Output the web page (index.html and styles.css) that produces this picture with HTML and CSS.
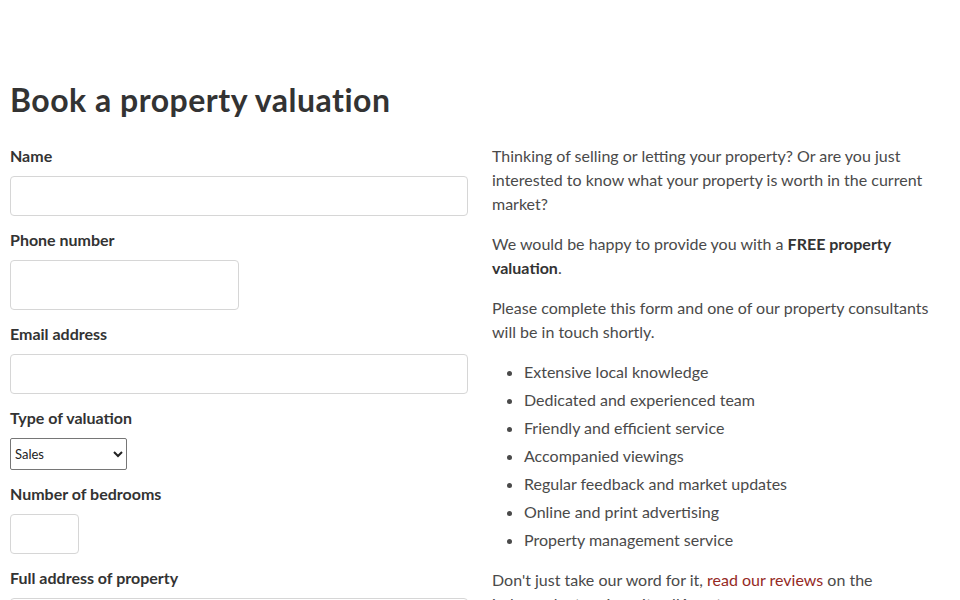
FILE: index.html
```html
<!DOCTYPE html>
<html lang="en">
<head>
<meta charset="utf-8">
<title>Book a property valuation</title>
<link rel="stylesheet" href="styles.css">
</head>
<body>
<main class="page">
  <h1 class="title">Book a property valuation</h1>
  <div class="columns">
    <form class="form">
      <div class="field">
        <label class="label" for="name">Name</label>
        <input class="input input-full" id="name" type="text">
      </div>
      <div class="field">
        <label class="label" for="phone">Phone number</label>
        <input class="input input-half input-tall" id="phone" type="tel">
      </div>
      <div class="field">
        <label class="label" for="email">Email address</label>
        <input class="input input-full" id="email" type="email">
      </div>
      <div class="field">
        <label class="label" for="type">Type of valuation</label>
        <select class="select" id="type">
          <option>Sales</option>
          <option>Lettings</option>
        </select>
      </div>
      <div class="field">
        <label class="label" for="beds">Number of bedrooms</label>
        <input class="input input-small" id="beds" type="text">
      </div>
      <div class="field">
        <label class="label" for="address">Full address of property</label>
        <textarea class="input input-full textarea" id="address"></textarea>
      </div>
    </form>
    <section class="info">
      <p class="text">Thinking of selling or letting your property? Or are you just interested to know what your property is worth in the current market?</p>
      <p class="text">We would be happy to provide you with a <strong class="strong">FREE property valuation</strong>.</p>
      <p class="text">Please complete this form and one of our property consultants will be in touch shortly.</p>
      <ul class="list">
        <li class="item">Extensive local knowledge</li>
        <li class="item">Dedicated and experienced team</li>
        <li class="item">Friendly and efficient service</li>
        <li class="item">Accompanied viewings</li>
        <li class="item">Regular feedback and market updates</li>
        <li class="item">Online and print advertising</li>
        <li class="item">Property management service</li>
      </ul>
      <p class="text">Don't just take our word for it, <a class="link" href="#">read our reviews</a> on the independent review site allAgents.</p>
    </section>
  </div>
</main>
</body>
</html>
```
FILE: styles.css
```css
* {
  box-sizing: border-box;
}

html, body {
  margin: 0;
  padding: 0;
  background: #ffffff;
}

body {
  font-family: Lato, "Open Sans", "Liberation Sans", sans-serif;
  font-size: 16px;
  line-height: 24px;
  color: #4a4a4a;
}

.page {
  width: 940px;
  margin: 0 10px;
  padding-top: 81px;
}

.title {
  margin: 0 0 25px;
  font-size: 32px;
  line-height: 38px;
  font-weight: 700;
  letter-spacing: 0.5px;
  color: #333333;
}

.columns {
  display: grid;
  grid-template-columns: 458px 458px;
  column-gap: 24px;
}

.form {
  display: flex;
  flex-direction: column;
  gap: 12px;
}

.field {
  display: flex;
  flex-direction: column;
  align-items: flex-start;
}

.label {
  display: block;
  margin-bottom: 8px;
  font-weight: 700;
  color: #333333;
}

.input {
  display: block;
  height: 40px;
  padding: 6px 10px;
  border: 1px solid #d6d6d6;
  border-radius: 4px;
  background: #ffffff;
  font-family: inherit;
  font-size: 16px;
  color: #333333;
}

.input-full {
  width: 458px;
}

.input-half {
  width: 229px;
}

.input-tall {
  height: 50px;
}

.input-small {
  width: 69px;
}

.textarea {
  height: 80px;
  resize: vertical;
}

.select {
  width: 117px;
  height: 32px;
  border: 1px solid #767676;
  border-radius: 2px;
  background: #ffffff;
  font-family: inherit;
  font-size: 13px;
  color: #222222;
}

.text {
  margin: 0 0 16px;
}

.strong {
  font-weight: 700;
  color: #333333;
}

.list {
  margin: 0 0 16px;
  padding-left: 32px;
}

.item {
  margin-bottom: 4px;
}

.item:last-child {
  margin-bottom: 0;
}

.link {
  color: #952a1f;
  text-decoration: none;
}
```
